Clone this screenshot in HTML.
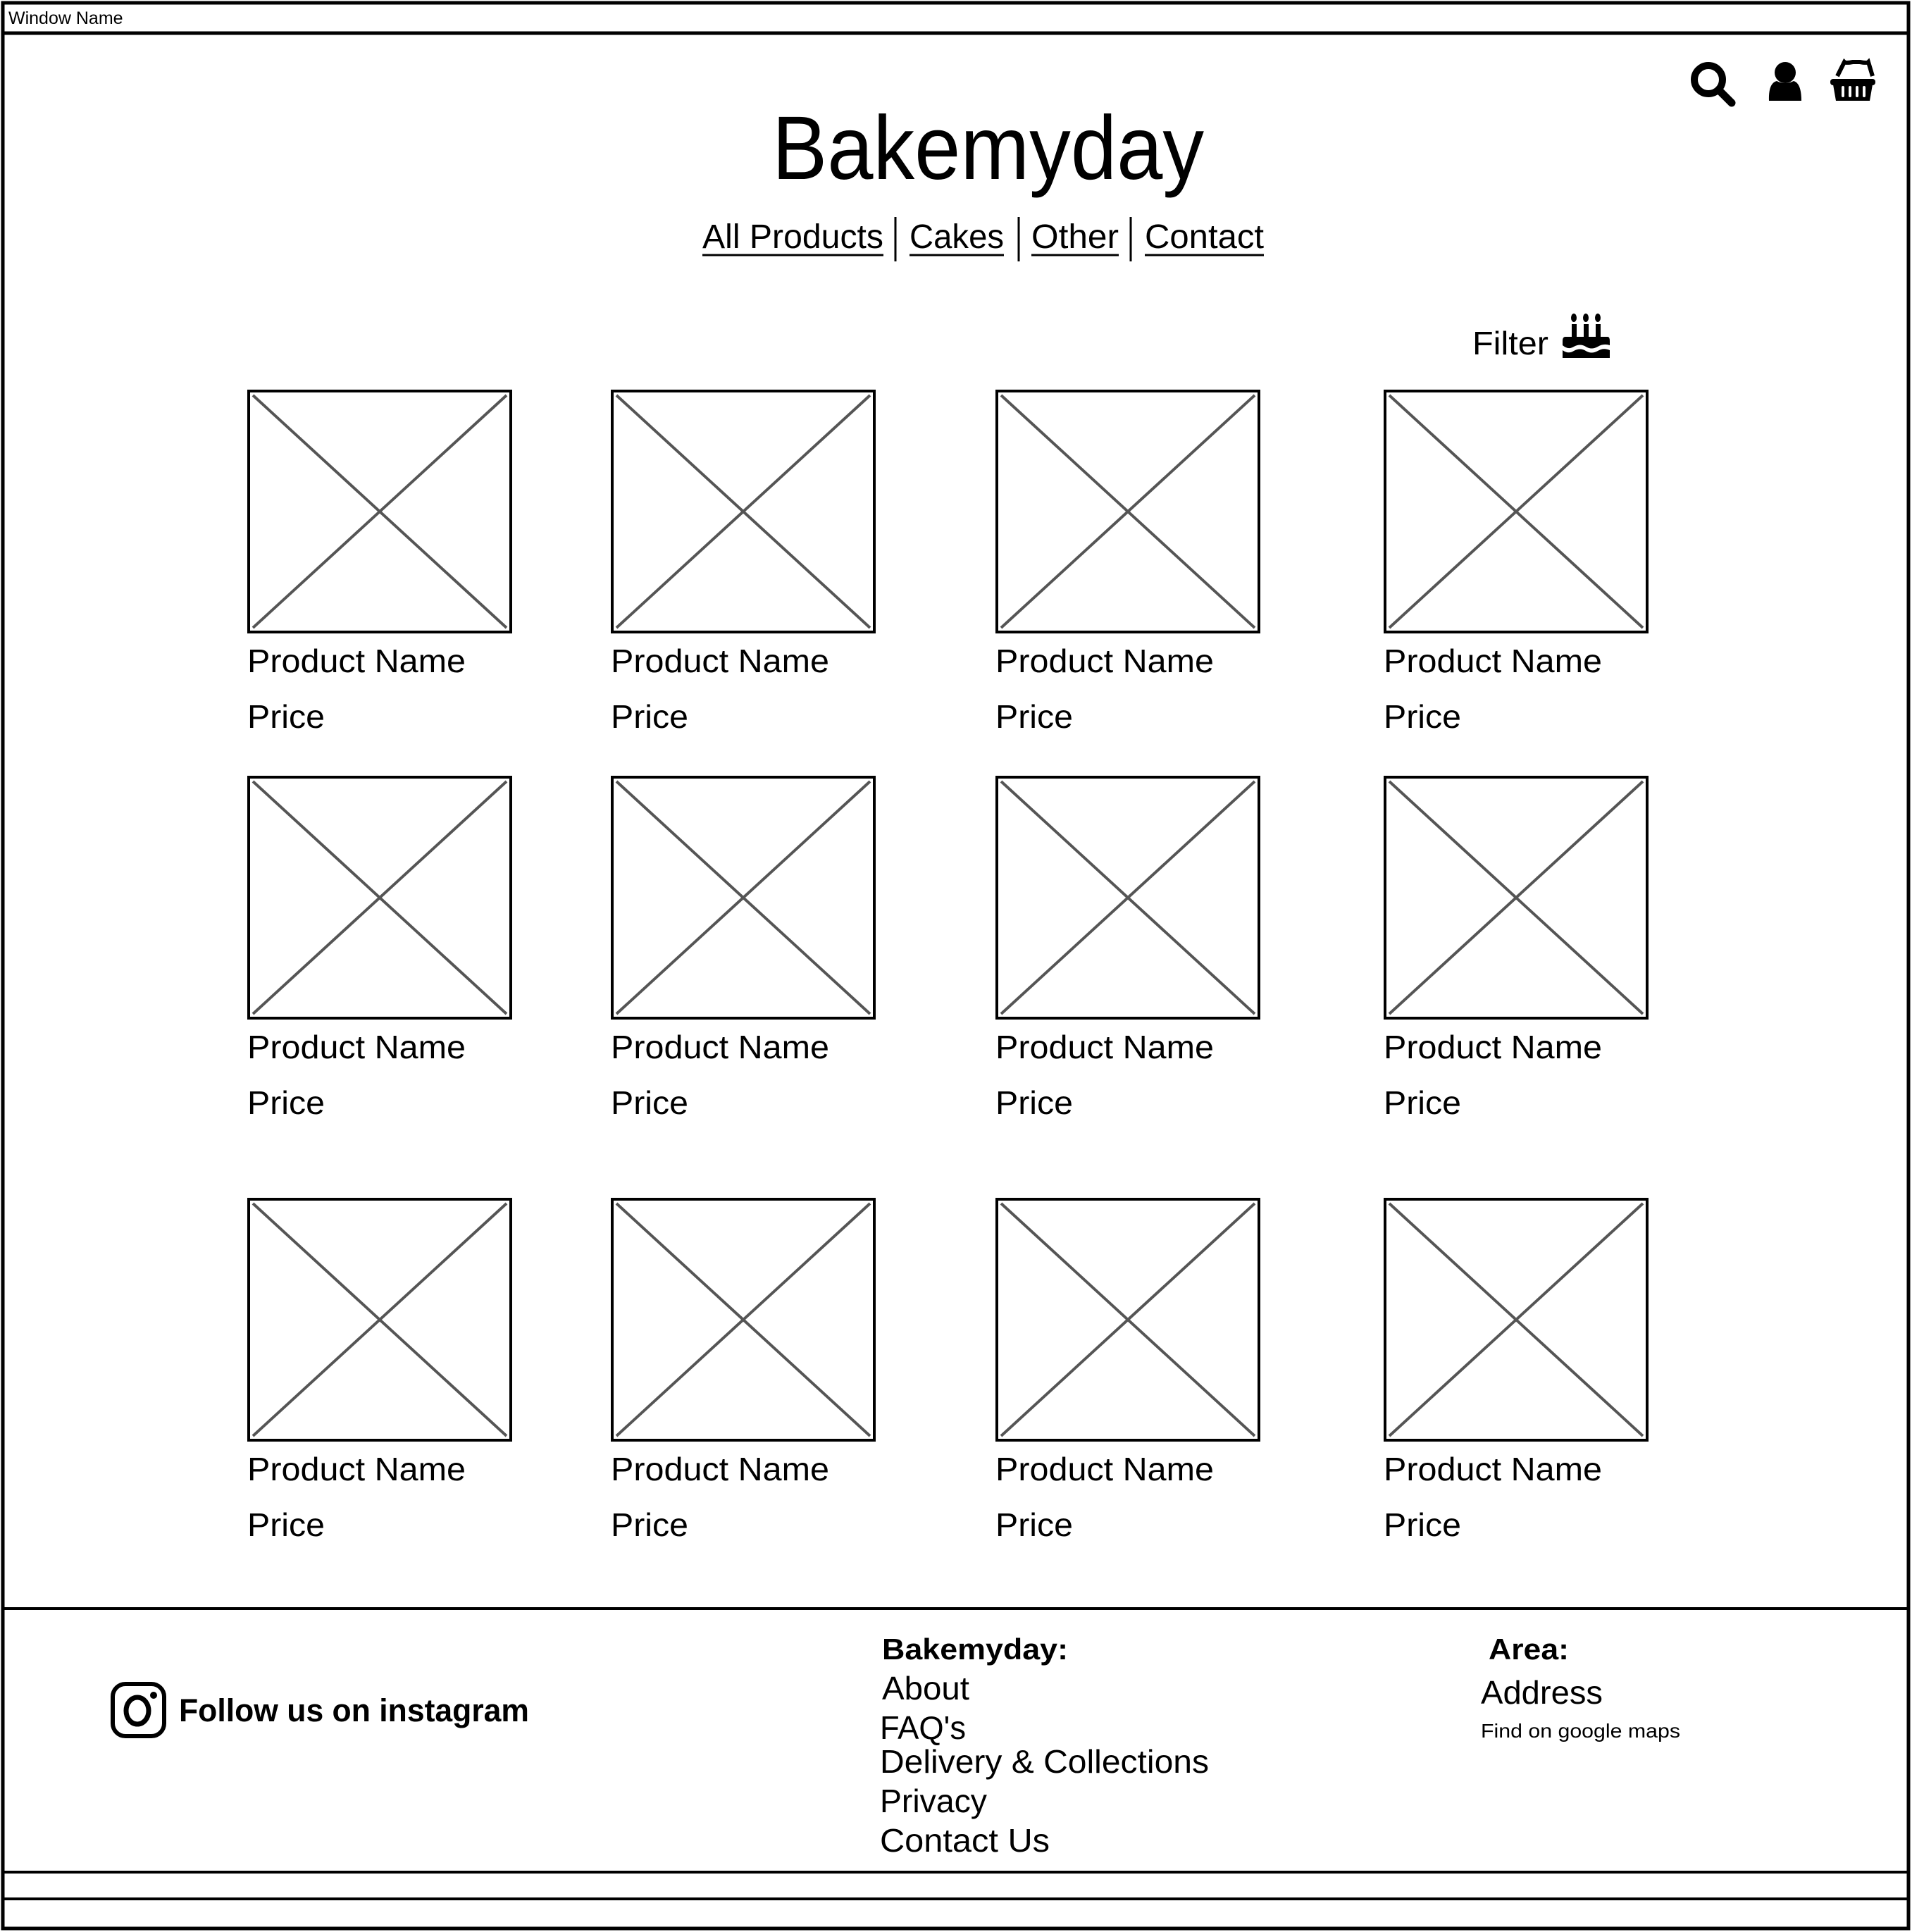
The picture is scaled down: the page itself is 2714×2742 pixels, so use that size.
<!DOCTYPE html>
<html><head><meta charset="utf-8"><style>html,body{margin:0;padding:0;background:#fff}svg{display:block}</style></head><body>
<svg width="2714" height="2742" viewBox="0 0 2714 2742" xmlns="http://www.w3.org/2000/svg" font-family="Liberation Sans, sans-serif" fill="#000">
<rect x="4" y="4" width="2705" height="2733" fill="#fff" stroke="#000" stroke-width="5"/>
<line x1="4" y1="47" x2="2709" y2="47" stroke="#000" stroke-width="5"/>
<text x="12" y="34" font-size="25">Window Name</text>
<line x1="4" y1="2283" x2="2709" y2="2283" stroke="#000" stroke-width="4"/>
<line x1="4" y1="2657" x2="2709" y2="2657" stroke="#000" stroke-width="4"/>
<line x1="4" y1="2695" x2="2709" y2="2695" stroke="#000" stroke-width="4"/>
<!-- icons -->
<circle cx="2425" cy="113" r="20" fill="none" stroke="#000" stroke-width="10"/>
<line x1="2440" y1="128" x2="2458" y2="146" stroke="#000" stroke-width="11" stroke-linecap="round"/>
<circle cx="2534" cy="103" r="15"/>
<path d="M2511 143 Q2510 118 2522 115 Q2534 121 2546 115 Q2557 118 2557 143 Z"/>
<path d="M2608 108 L2618 88 Q2620 90 2630 88 L2640 88 Q2650 90 2652 88 L2658 108" fill="none" stroke="#000" stroke-width="6"/>
<rect x="2598" y="112" width="64" height="9" rx="4"/>
<path d="M2602 120 L2658 120 L2654 143 L2606 143 Z"/>
<g stroke="#fff" stroke-width="4" stroke-linecap="round"><line x1="2616" y1="124" x2="2616" y2="136"/><line x1="2626" y1="124" x2="2626" y2="136"/><line x1="2636" y1="124" x2="2636" y2="136"/><line x1="2646" y1="124" x2="2646" y2="136"/></g>
<!-- title -->
<text x="1096" y="254" font-size="128" textLength="613" lengthAdjust="spacingAndGlyphs">Bakemyday</text>
<g font-size="48">
<text x="997" y="352" textLength="257" lengthAdjust="spacingAndGlyphs">All Products</text>
<text x="1291" y="352" textLength="134" lengthAdjust="spacingAndGlyphs">Cakes</text>
<text x="1464" y="352" textLength="124" lengthAdjust="spacingAndGlyphs">Other</text>
<text x="1625" y="352" textLength="169" lengthAdjust="spacingAndGlyphs">Contact</text>
</g>
<g stroke="#000" stroke-width="3"><line x1="997" y1="362" x2="1254" y2="362"/><line x1="1291" y1="362" x2="1425" y2="362"/><line x1="1464" y1="362" x2="1588" y2="362"/><line x1="1625" y1="362" x2="1794" y2="362"/>
<line x1="1271" y1="308" x2="1271" y2="371"/><line x1="1446" y1="308" x2="1446" y2="371"/><line x1="1605" y1="308" x2="1605" y2="371"/></g>
<text x="2090" y="503" font-size="46" textLength="108" lengthAdjust="spacingAndGlyphs">Filter</text>
<!-- cake -->
<g>
<ellipse cx="2234" cy="451" rx="4" ry="6"/><ellipse cx="2251" cy="451" rx="4" ry="6"/><ellipse cx="2268" cy="451" rx="4" ry="6"/>
<rect x="2231" y="460" width="7" height="18"/><rect x="2248" y="460" width="7" height="18"/><rect x="2265" y="460" width="7" height="18"/>
<path d="M2222 478 L2282 478 Q2285 478 2285 484 L2285 490 Q2276 487 2268 492 Q2259 497 2251 492 Q2243 487 2234 492 Q2226 497 2218 490 L2218 484 Q2218 478 2222 478 Z"/>
<path d="M2218 497 Q2226 503 2234 498 Q2243 493 2251 498 Q2259 503 2268 498 Q2276 493 2285 497 L2285 508 L2218 508 Z"/>
</g>
<defs>
<g id="card">
<rect x="2" y="2" width="372" height="342" fill="#fff" stroke="#000" stroke-width="4"/>
<line x1="8" y1="8" x2="368" y2="338" stroke="#555" stroke-width="4"/>
<line x1="368" y1="8" x2="8" y2="338" stroke="#555" stroke-width="4"/>
<text x="0" y="401" font-size="46" textLength="310" lengthAdjust="spacingAndGlyphs">Product Name</text>
<text x="0" y="480" font-size="46" textLength="110" lengthAdjust="spacingAndGlyphs">Price</text>
</g>
</defs>
<use href="#card" x="351" y="553"/><use href="#card" x="867" y="553"/><use href="#card" x="1413" y="553"/><use href="#card" x="1964" y="553"/>
<use href="#card" x="351" y="1101"/><use href="#card" x="867" y="1101"/><use href="#card" x="1413" y="1101"/><use href="#card" x="1964" y="1101"/>
<use href="#card" x="351" y="1700"/><use href="#card" x="867" y="1700"/><use href="#card" x="1413" y="1700"/><use href="#card" x="1964" y="1700"/>
<!-- footer -->
<rect x="160" y="2390" width="73" height="74" rx="18" fill="none" stroke="#000" stroke-width="6"/>
<ellipse cx="195" cy="2428" rx="16" ry="19" fill="none" stroke="#000" stroke-width="7"/>
<circle cx="218" cy="2406" r="5"/>
<text x="254" y="2443" font-size="45" font-weight="bold" textLength="497" lengthAdjust="spacingAndGlyphs">Follow us on instagram</text>
<text x="1252" y="2355" font-size="42" font-weight="bold" textLength="264" lengthAdjust="spacingAndGlyphs">Bakemyday:</text>
<g font-size="46">
<text x="1252" y="2412" textLength="124" lengthAdjust="spacingAndGlyphs">About</text>
<text x="1249" y="2468" textLength="122" lengthAdjust="spacingAndGlyphs">FAQ's</text>
<text x="1249" y="2516" textLength="467" lengthAdjust="spacingAndGlyphs">Delivery &amp; Collections</text>
<text x="1249" y="2572" textLength="152" lengthAdjust="spacingAndGlyphs">Privacy</text>
<text x="1249" y="2628" textLength="241" lengthAdjust="spacingAndGlyphs">Contact Us</text>
<text x="2102" y="2418" textLength="173" lengthAdjust="spacingAndGlyphs">Address</text>
</g>
<text x="2113" y="2355" font-size="42" font-weight="bold" textLength="114" lengthAdjust="spacingAndGlyphs">Area:</text>
<text x="2102" y="2466" font-size="28" textLength="283" lengthAdjust="spacingAndGlyphs">Find on google maps</text>
</svg>
</body></html>
